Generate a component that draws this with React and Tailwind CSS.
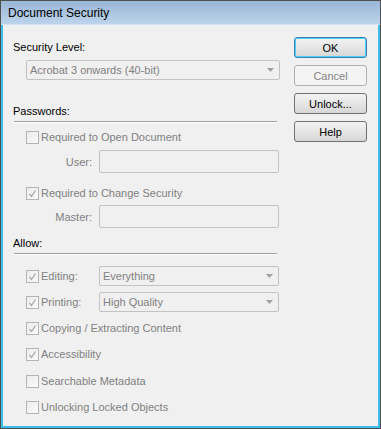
function Check({ checked }) {
  return (
    <span className="w-[13px] h-[13px] shrink-0 border border-[#b4b4b4] bg-gradient-to-br from-[#ececec] to-[#fafafa] flex items-center justify-center">
      {checked && (
        <svg width="9" height="9" viewBox="0 0 9 9">
          <path d="M1.5 5 L3.5 7.5 L7.5 1.5" fill="none" stroke="#a8a8a8" strokeWidth="1.3" />
        </svg>
      )}
    </span>
  );
}

function CheckRow({ checked, label, className = "" }) {
  return (
    <div className={"flex items-center ml-[13px] h-[14px] " + className}>
      <Check checked={checked} />
      <span className="ml-[2px] text-[#808080]">{label}</span>
    </div>
  );
}

function Select({ value, className = "" }) {
  return (
    <div className={"h-[20px] border border-[#c2c2c2] rounded-[2px] bg-[#f0f0f0] flex items-center justify-between pl-[3px] pr-[5px] text-[#808080] " + className}>
      <span>{value}</span>
      <svg width="7" height="4" viewBox="0 0 7 4">
        <path d="M0 0 L7 0 L3.5 4 Z" fill="#a0a0a0" />
      </svg>
    </div>
  );
}

function Field({ label }) {
  return (
    <div className="flex items-center">
      <span className="w-[79px] text-right text-[#808080]">{label}</span>
      <div className="ml-[7px] w-[180px] h-[23px] border border-[#c2c2c2] rounded-[2px] bg-[#f0f0f0]"></div>
    </div>
  );
}

function Button({ children, variant }) {
  const border =
    variant === "default"
      ? "border-[#3c7fb1] shadow-[inset_0_0_0_1px_#48d2fb]"
      : variant === "disabled"
      ? "border-[#adb2b5] text-[#838383]"
      : "border-[#707070]";
  const bg =
    variant === "disabled"
      ? "bg-[#f4f4f4]"
      : "bg-gradient-to-b from-[#f3f3f3] via-[#e6e6e6] to-[#d6d6d6]";
  return (
    <div className={"w-[73px] h-[21px] rounded-[3px] border flex items-center justify-center " + border + " " + bg}>
      {children}
    </div>
  );
}

export default function App() {
  return (
    <div
      className="w-[381px] h-[429px] border border-[#505050] flex flex-col text-[11px] leading-[14px] text-black"
      style={{ fontFamily: '"Liberation Sans", Arial, sans-serif' }}
    >
      <div className="h-[24px] shrink-0 bg-gradient-to-b from-[#9ab6d6] to-[#bcd3eb] border-b border-[#d6e2ef] flex items-center pl-[7px] text-[12px] text-black">
        Document Security
      </div>

      <div className="flex-1 flex bg-[#f0f0f0] border-x-2 border-b-2 border-[#3cbdec]">
        <div className="w-[291px] pl-[10px] flex flex-col">
          <div className="mt-[15px]">Security Level:</div>
          <Select value="Acrobat 3 onwards (40-bit)" className="mt-[6px] ml-[13px] w-[254px]" />

          <div className="mt-[24px]">Passwords:</div>
          <div className="mt-[3px] ml-[1px] w-[263px] h-[1px] bg-[#a0a0a0] border-b border-white box-content"></div>

          <CheckRow label="Required to Open Document" className="mt-[7px]" />
          <div className="mt-[6px]">
            <Field label="User:" />
          </div>
          <CheckRow checked label="Required to Change Security" className="mt-[13px]" />
          <div className="mt-[5px]">
            <Field label="Master:" />
          </div>

          <div className="mt-[8px]">Allow:</div>
          <div className="mt-[3px] ml-[1px] w-[263px] h-[1px] bg-[#a0a0a0] border-b border-white box-content"></div>

          <div className="flex items-center mt-[11px]">
            <CheckRow checked label="Editing:" className="w-[73px]" />
            <Select value="Everything" className="w-[180px]" />
          </div>
          <div className="flex items-center mt-[6px]">
            <CheckRow checked label="Printing:" className="w-[73px]" />
            <Select value="High Quality" className="w-[180px]" />
          </div>

          <CheckRow checked label="Copying / Extracting Content" className="mt-[9px]" />
          <CheckRow checked label="Accessibility" className="mt-[12px]" />
          <CheckRow label="Searchable Metadata" className="mt-[13px]" />
          <CheckRow label="Unlocking Locked Objects" className="mt-[12px]" />
        </div>

        <div className="flex flex-col gap-[7px] pt-[12px]">
          <Button variant="default">OK</Button>
          <Button variant="disabled">Cancel</Button>
          <Button>Unlock...</Button>
          <Button>Help</Button>
        </div>
      </div>
    </div>
  );
}
